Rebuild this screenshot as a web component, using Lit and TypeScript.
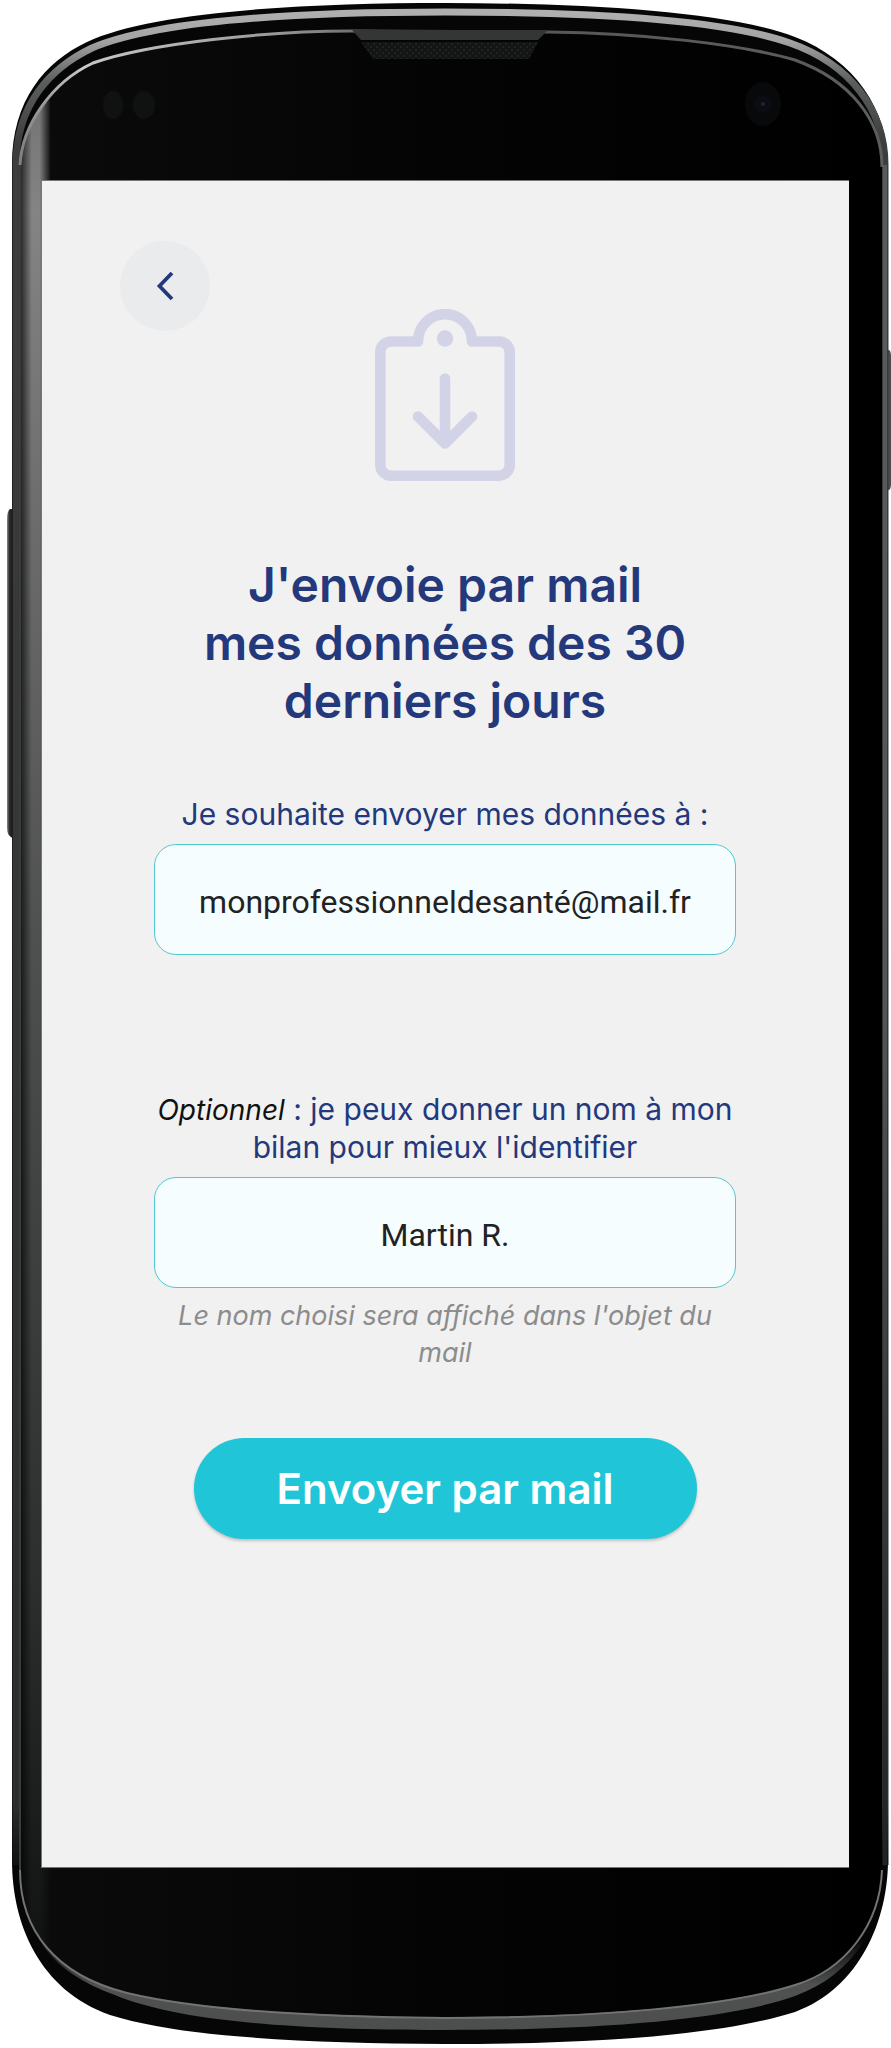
import { LitElement, html, css } from "lit";
import { customElement, state } from "lit/decorators.js";

@customElement("phone-frame")
export class PhoneFrame extends LitElement {
  static styles = css`
    :host {
      display: flex;
      position: relative;
      box-sizing: border-box;
      width: 100%;
      min-height: 100vh;
      padding: 180px 42px 180px 41px;
    }
    .shell {
      position: absolute;
      inset: 0;
      width: 100%;
      height: 100%;
    }
    .screen {
      position: relative;
      display: flex;
      flex: 1;
      min-width: 0;
      box-sizing: border-box;
      border: solid #777;
      border-width: 1px 0 1px 1px;
      background: #f1f1f1;
    }
    ::slotted(*) {
      flex: 1;
      min-width: 0;
    }
  `;

  render() {
    return html`
      <svg class="shell" viewBox="0 0 891 2048" preserveAspectRatio="none" aria-hidden="true">
        <defs>
          <linearGradient id="key" x1="0" x2="1" y1="0" y2="0">
            <stop offset="0" stop-color="#8a8a8a" />
            <stop offset="0.4" stop-color="#2c2d2d" />
            <stop offset="1" stop-color="#151616" />
          </linearGradient>
          <linearGradient id="rim" gradientUnits="userSpaceOnUse" x1="0" x2="0" y1="0" y2="2048">
            <stop offset="0" stop-color="#b4b4b4" />
            <stop offset="0.02" stop-color="#a4a4a4" />
            <stop offset="0.04" stop-color="#5c5e5e" />
            <stop offset="0.07" stop-color="#3c3d3d" />
            <stop offset="0.88" stop-color="#2c2d2d" />
            <stop offset="0.91" stop-color="#101111" />
            <stop offset="1" stop-color="#030404" />
          </linearGradient>
          <linearGradient id="rightRim" gradientUnits="userSpaceOnUse" x1="0" x2="0" y1="100" y2="1860">
            <stop offset="0" stop-color="#5a5b5b" />
            <stop offset="0.5" stop-color="#555656" />
            <stop offset="1" stop-color="#222323" />
          </linearGradient>
          <linearGradient id="edge" gradientUnits="userSpaceOnUse" x1="12" x2="888" y1="0" y2="0">
            <stop offset="0" stop-color="#777" />
            <stop offset="0.08" stop-color="#c8c8c8" />
            <stop offset="0.3" stop-color="#999" />
            <stop offset="0.45" stop-color="#555" />
            <stop offset="1" stop-color="#5c5d5d" />
          </linearGradient>
          <linearGradient id="glass" x1="0" x2="1" y1="0" y2="0">
            <stop offset="0" stop-color="#0b0b0b" />
            <stop offset="0.5" stop-color="#040404" />
            <stop offset="1" stop-color="#000" />
          </linearGradient>
          <linearGradient id="sideX" x1="0" x2="1" y1="0" y2="0">
            <stop offset="0" stop-color="#000" stop-opacity="0.8" />
            <stop offset="0.4" stop-color="#000" stop-opacity="0" />
            <stop offset="0.65" stop-color="#0b0b0b" stop-opacity="0" />
            <stop offset="1" stop-color="#0b0b0b" />
          </linearGradient>
          <linearGradient id="sideY" x1="0" x2="0" y1="0" y2="1">
            <stop offset="0" stop-color="#6e6e6e" />
            <stop offset="0.08" stop-color="#848484" />
            <stop offset="0.25" stop-color="#6b6b6b" />
            <stop offset="0.45" stop-color="#505151" />
            <stop offset="0.8" stop-color="#2c2d2d" />
            <stop offset="1" stop-color="#101111" />
          </linearGradient>
          <linearGradient id="chin" gradientUnits="userSpaceOnUse" x1="0" x2="0" y1="1940" y2="2030">
            <stop offset="0" stop-color="#555" stop-opacity="0" />
            <stop offset="0.5" stop-color="#505151" />
            <stop offset="1" stop-color="#4c4d4d" />
          </linearGradient>
          <pattern id="mesh" width="6" height="6" patternUnits="userSpaceOnUse">
            <rect width="6" height="6" fill="#131515" />
            <circle cx="2" cy="2" r="1" fill="#242727" />
            <circle cx="5" cy="5" r="1" fill="#242727" />
          </pattern>
          <clipPath id="glassClip">
            <path d="M20 165C22 125 52 82 93 63C150 43 270 31 350 31L548 32C640 33 740 44 795 60C850 80 882 120 882 167V1870C880 1925 845 1970 795 1985C730 2006 600 2017 445 2017C300 2016 190 2008 127 1993C55 1975 20 1930 20 1870Z" />
          </clipPath>
        </defs>

        <path fill="url(#key)" d="M13 509H10Q7 511 7 520V828Q7 836 13 838Z" />
        <path fill="#4a4b4b" d="M886 350H889Q891 351 891 356V484Q891 489 889 490H886Z" />

        <path fill="#060606" d="M12 165C12 100 45 62 87 42C150 12 300 3 445 3C590 3 730 12 795 37C855 60 888 110 888 165V1860C888 1920 860 1988 795 2012C720 2036 590 2044 445 2044C300 2043 180 2037 110 2015C40 1990 12 1925 12 1860Z" />
        <path fill="none" stroke="url(#rim)" stroke-width="7" d="M16 1865V165C16 105 50 68 92 48C160 19 310 12 445 12C590 12 725 20 790 43C850 64 885 110 885 165V1865" />
        <path fill="url(#chin)" d="M20 1870C20 1930 50 1972 115 1995C170 2018 270 2030 445 2030C610 2030 735 2018 795 1996C855 1974 882 1925 882 1870Z" />
        <g clip-path="url(#glassClip)">
          <rect x="12" width="876" height="2048" fill="url(#glass)" />
          <rect x="20" y="60" width="30" height="1910" fill="url(#sideY)" />
          <rect x="19" y="60" width="32" height="1910" fill="url(#sideX)" />
        </g>
        <path fill="none" stroke="#727373" stroke-width="2" d="M20 1870C20 1930 55 1975 127 1993C190 2008 300 2017 445 2018C600 2018 730 2006 795 1985C845 1970 880 1925 882 1870" />
        <path fill="none" stroke="url(#edge)" stroke-width="3" d="M20 165C22 125 52 82 93 63C150 43 270 31 350 31L548 32C640 33 740 44 795 60C850 80 882 120 882 167" />
        <path fill="none" stroke="#3a3b3b" stroke-width="2" d="M20 165V1870" />
        <rect x="883" y="165" width="4" height="1700" fill="url(#rightRim)" />
        <path fill="#343636" d="M352 30H548L538 40H361Z" />
        <path fill="url(#mesh)" d="M361 42H538L529 59H373Z" />
        <ellipse cx="113" cy="105" rx="10" ry="14" fill="#101212" />
        <ellipse cx="144" cy="105" rx="11" ry="14" fill="#101212" />
        <ellipse cx="763" cy="104" rx="18" ry="22" fill="#08090b" />
        <circle cx="763" cy="104" r="9" fill="#0c0d12" />
        <circle cx="763" cy="104" r="2" fill="#20242c" />
      </svg>
      <div class="screen"><slot></slot></div>
    `;
  }
}

@customElement("app-root")
export class AppRoot extends LitElement {
  static styles = css`
    :host {
      display: block;
      background: #fff;
      font-family: Inter, "Liberation Sans", sans-serif;
      color: #24387c;
    }
    .page {
      display: flex;
      flex-direction: column;
      box-sizing: border-box;
      padding: 60px 79px 60px 78px;
    }
    .back {
      display: grid;
      place-items: center;
      width: 90px;
      height: 90px;
      padding: 0;
      border: 0;
      border-radius: 50%;
      background: #e9ebed;
      color: #24387c;
      cursor: pointer;
    }
    .clipboard {
      display: block;
      align-self: center;
      width: 140px;
      height: 172px;
      margin-top: -22px;
    }
    form {
      display: flex;
      flex-direction: column;
      align-items: center;
      align-self: center;
      width: 100%;
      max-width: 582px;
    }
    h1 {
      margin: 75px 0 0;
      max-width: 510px;
      font-size: 48px;
      line-height: 58px;
      font-weight: 600;
      text-align: center;
    }
    .field {
      display: flex;
      flex-direction: column;
      width: 100%;
      text-align: center;
      font-size: 30px;
      line-height: 37px;
    }
    .recipient {
      margin-top: 66px;
    }
    .name {
      margin-top: 136px;
    }
    .optional {
      color: #111;
      font-size: 28px;
      font-style: italic;
    }
    input {
      box-sizing: border-box;
      width: 100%;
      height: 111px;
      margin-top: 11px;
      padding: 4px 24px 0;
      border: 1px solid #50c8d0;
      border-radius: 22px;
      background: #f5fdff;
      color: #222;
      font: 32px/40px Roboto, "Liberation Sans", sans-serif;
      text-align: center;
    }
    .hint {
      align-self: center;
      max-width: 550px;
      margin: 9px 0 0;
      color: #8c8c8c;
      font-size: 27px;
      font-style: italic;
    }
    .send {
      width: 503px;
      max-width: 100%;
      height: 101px;
      margin-top: 67px;
      padding: 0;
      border: 0;
      border-radius: 51px;
      background: #20c6d7;
      box-shadow: 0 2px 3px rgb(0 0 0 / 20%);
      color: #fff;
      font: 600 42px/48px Inter, "Liberation Sans", sans-serif;
      cursor: pointer;
    }
  `;

  @state() private email = "monprofessionneldesanté@mail.fr";
  @state() private name = "Martin R.";

  render() {
    return html`
      <phone-frame>
        <main class="page">
          <button class="back" type="button" aria-label="Retour">
            <svg width="20" height="30" viewBox="0 0 20 30" fill="none" stroke="currentColor" stroke-width="3.8">
              <path d="M17 2L4.500 15L17 28" />
            </svg>
          </button>
          <svg class="clipboard" viewBox="0 0 140 172" fill="none" stroke="#d3d3e8" stroke-width="10.6" stroke-linecap="round" stroke-linejoin="round" aria-hidden="true">
            <path d="M43 32.500H16A10.700 10.700 0 0 0 5.300 43V156A10.700 10.700 0 0 0 16 166.700H124A10.700 10.700 0 0 0 134.700 156V43A10.700 10.700 0 0 0 124 32.500H97A26.800 27.200 0 0 0 43 32.500Z" />
            <path d="M70 69.500V134.500M43 107.500L70 134.500L97 107.500" />
            <circle cx="70" cy="29.500" r="8.300" fill="#d3d3e8" stroke="none" />
          </svg>
          <form @submit=${(e: Event) => e.preventDefault()}>
            <h1>J'envoie par mail<br />mes données des 30 derniers jours</h1>
            <div class="field recipient">
              <label for="email">Je souhaite envoyer mes données à :</label>
              <input id="email" type="text" inputmode="email" .value=${this.email}
                @input=${(e: InputEvent) => (this.email = (e.target as HTMLInputElement).value)} />
            </div>
            <div class="field name">
              <label for="name"><span class="optional">Optionnel</span> : je peux donner un nom à mon bilan pour mieux l'identifier</label>
              <input id="name" type="text" aria-describedby="name-hint" .value=${this.name}
                @input=${(e: InputEvent) => (this.name = (e.target as HTMLInputElement).value)} />
              <p class="hint" id="name-hint">Le nom choisi sera affiché dans l'objet du mail</p>
            </div>
            <button class="send" type="submit">Envoyer par mail</button>
          </form>
        </main>
      </phone-frame>
    `;
  }
}
